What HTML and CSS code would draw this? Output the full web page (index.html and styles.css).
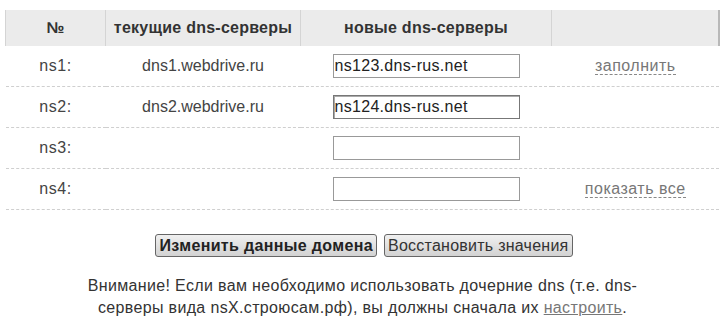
FILE: index.html
```html
<!DOCTYPE html>
<html lang="ru">
<head>
<meta charset="utf-8">
<link rel="stylesheet" href="styles.css">
</head>
<body>
<div class="page">
  <table class="dns">
    <thead>
      <tr>
        <th class="c1">№</th>
        <th class="c2">текущие dns-серверы</th>
        <th class="c3">новые dns-серверы</th>
        <th class="c4"></th>
      </tr>
    </thead>
    <tbody>
      <tr>
        <td class="num">ns1:</td>
        <td class="cur">dns1.webdrive.ru</td>
        <td><input class="field" type="text" value="ns123.dns-rus.net"></td>
        <td><span class="dlink">заполнить</span></td>
      </tr>
      <tr>
        <td class="num">ns2:</td>
        <td class="cur">dns2.webdrive.ru</td>
        <td><input class="field focused" type="text" value="ns124.dns-rus.net"></td>
        <td></td>
      </tr>
      <tr>
        <td class="num">ns3:</td>
        <td class="cur"></td>
        <td><input class="field" type="text" value=""></td>
        <td></td>
      </tr>
      <tr>
        <td class="num">ns4:</td>
        <td class="cur"></td>
        <td><input class="field" type="text" value=""></td>
        <td><span class="dlink">показать все</span></td>
      </tr>
    </tbody>
  </table>
  <div class="actions">
    <button class="btn primary" type="button">Изменить данные домена</button>
    <button class="btn" type="button">Восстановить значения</button>
  </div>
  <p class="note">Внимание! Если вам необходимо использовать дочерние dns (т.е. dns-серверы вида nsX.строюсам.рф), вы должны сначала их <span class="ulink">настроить</span>.</p>
</div>
</body>
</html>
```
FILE: styles.css
```css
html, body {
  margin: 0;
  padding: 0;
  background: #fff;
}
body {
  font-family: "Liberation Sans", Arial, sans-serif;
  font-size: 16px;
  color: #333;
}
.page {
  width: 725px;
  padding-top: 10px;
}
.dns {
  margin-left: 5px;
  width: 715px;
  border-collapse: collapse;
  border-spacing: 0;
}
.dns th {
  height: 36px;
  padding: 0;
  background: #ebebeb;
  font-weight: bold;
  color: #333;
  letter-spacing: 0.25px;
  border-left: 1px solid #d4d4d4;
  text-align: center;
}
.dns th.c1 { width: 99px; }
.dns th.c2 { width: 194px; }
.dns th.c3 { width: 250px; }
.dns th.c4 { border-right: 2px solid #b8b8b8; }
.dns td {
  height: 40px;
  padding: 0;
  text-align: center;
  color: #444;
  border-bottom: 1px dashed #cfcfcf;
}
.dns td.num {
  letter-spacing: 0.6px;
}
.field {
  box-sizing: border-box;
  width: 187px;
  height: 24px;
  margin: 0;
  padding: 0 1px;
  border: 1px solid #999;
  font-family: "Liberation Sans", Arial, sans-serif;
  font-size: 16px;
  letter-spacing: 0.3px;
  color: #222;
  background: #fff;
  vertical-align: middle;
}
.field.focused {
  border: 1px solid #777;
  box-shadow: inset 1px 1px 0 #aaa;
}
.dlink {
  color: #777;
  letter-spacing: 0.5px;
  border-bottom: 1px dashed #888;
}
.actions {
  display: flex;
  justify-content: center;
  gap: 7px;
  margin-top: 24px;
  padding-left: 3px;
}
.btn {
  height: 23px;
  padding: 0 3px;
  border: 1px solid #666;
  border-radius: 3px;
  background: linear-gradient(#f0f0f0, #d2d2d2);
  font-family: "Liberation Sans", Arial, sans-serif;
  font-size: 16px;
  letter-spacing: 0.25px;
  color: #333;
  line-height: 20px;
}
.btn.primary {
  font-weight: bold;
  letter-spacing: 0.35px;
  color: #222;
}
.note {
  width: 570px;
  margin: 18px auto 0;
  text-align: center;
  line-height: 22px;
  letter-spacing: 0.35px;
  color: #333;
}
.ulink {
  color: #777;
  text-decoration: underline;
}
```
